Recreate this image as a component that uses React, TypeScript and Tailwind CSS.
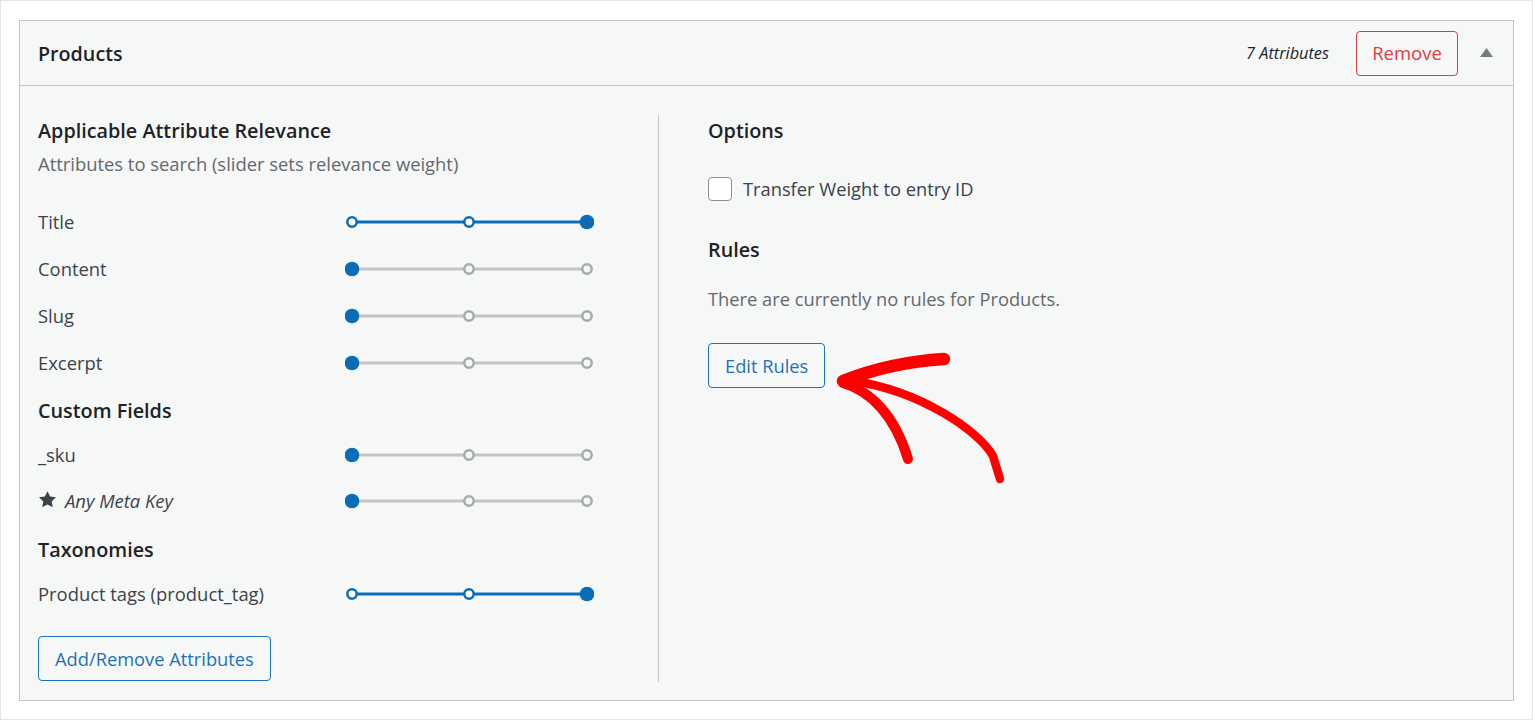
import React from "react";

const FONT = { fontFamily: '"Open Sans", "Noto Sans", sans-serif' };

function Slider({ value }: { value: 0 | 2 }) {
  const xs = [7, 124, 242];
  const blue = "#0a6cb5";
  if (value === 2) {
    return (
      <svg width="249" height="18" viewBox="0 0 249 18" className="block">
        <line x1="7" y1="9" x2="242" y2="9" stroke={blue} strokeWidth="3" />
        <circle cx={xs[0]} cy="9" r="4.7" fill="#fff" stroke={blue} strokeWidth="2.5" />
        <circle cx={xs[1]} cy="9" r="4.7" fill="#fff" stroke={blue} strokeWidth="2.5" />
        <circle cx={xs[2]} cy="9" r="7.3" fill={blue} />
      </svg>
    );
  }
  return (
    <svg width="249" height="18" viewBox="0 0 249 18" className="block">
      <line x1="7" y1="9" x2="242" y2="9" stroke="#c3c4c7" strokeWidth="3" />
      <circle cx={xs[1]} cy="9" r="4.7" fill="#f6f7f7" stroke="#a7aaad" strokeWidth="2.5" />
      <circle cx={xs[2]} cy="9" r="4.7" fill="#f6f7f7" stroke="#a7aaad" strokeWidth="2.5" />
      <circle cx={xs[0]} cy="9" r="7.3" fill={blue} />
    </svg>
  );
}

function Row({ label, value, h, italic, star }: { label: string; value: 0 | 2; h: string; italic?: boolean; star?: boolean }) {
  return (
    <div className={`flex items-center ${h}`}>
      <div className="w-[307px] flex items-center text-[18.4px] text-[#3c434a]">
        {star && (
          <svg width="19" height="19" viewBox="0 0 20 20" className="mr-[8px] -mt-[2px] shrink-0">
            <path d="M10 1.2l2.75 5.6 6.15.9-4.45 4.35 1.05 6.15L10 15.3l-5.5 2.9 1.05-6.15L1.1 7.7l6.15-.9z" fill="#3c434a" />
          </svg>
        )}
        <span className={italic ? "italic" : ""}>{label}</span>
      </div>
      <Slider value={value} />
    </div>
  );
}

export default function App() {
  return (
    <div style={FONT} className="relative w-[1533px] h-[720px] bg-white border border-[#e4e5e7] pl-[18px] pt-[19px]">
      <div className="w-[1495px] h-[681px] border border-[#c3c4c7] bg-[#f6f7f7] flex flex-col">
        {/* header */}
        <div className="h-[65px] border-b border-[#c3c4c7] flex items-center pl-[18px] pr-[19px]">
          <div className="text-[19.7px] font-semibold text-[#1d2327] flex-1 mt-[1px]">Products</div>
          <div className="text-[16.3px] italic text-[#1d2327] mr-[27px]">7 Attributes</div>
          <div className="h-[45px] w-[102px] rounded-[4px] border border-[#e23b3e] text-[#e23b3e] text-[18.5px] flex items-center justify-center">
            Remove
          </div>
          <svg width="13" height="9" viewBox="0 0 13 9" className="ml-[22px] mr-[1px] -mt-[2px]">
            <polygon points="6.5,0 13,9 0,9" fill="#787c82" />
          </svg>
        </div>
        {/* body */}
        <div className="flex flex-1 pt-[29px] pb-[18px] pl-[18px]">
          <div className="w-[621px] border-r border-[#c3c4c7] flex flex-col">
            <div className="mt-[2px] h-[28px] leading-[28px] text-[19.8px] font-semibold text-[#1d2327]">Applicable Attribute Relevance</div>
            <div className="mt-[7px] h-[24px] leading-[24px] text-[18.4px] text-[#646970]">Attributes to search (slider sets relevance weight)</div>
            <div className="mt-[22px]">
              <Row label="Title" value={2} h="h-[47px]" />
              <Row label="Content" value={0} h="h-[47px]" />
              <Row label="Slug" value={0} h="h-[47px]" />
              <Row label="Excerpt" value={0} h="h-[47px]" />
            </div>
            <div className="h-[47px] pt-[2px] flex items-center text-[19.8px] font-semibold text-[#1d2327]">Custom Fields</div>
            <Row label="_sku" value={0} h="h-[44px]" />
            <Row label="Any Meta Key" value={0} h="h-[47px]" italic star />
            <div className="h-[50px] pt-[2px] flex items-center text-[19.8px] font-semibold text-[#1d2327]">Taxonomies</div>
            <Row label="Product tags (product_tag)" value={2} h="h-[39px]" />
            <div className="mt-[23px]">
              <div className="inline-flex h-[45px] px-[16px] items-center rounded-[4px] border border-[#1f72b8] text-[#1f72b8] text-[18.3px] bg-[#f6f7f7]">
                Add/Remove Attributes
              </div>
            </div>
          </div>
          <div className="flex-1 pl-[49px] flex flex-col">
            <div className="mt-[2px] h-[28px] leading-[28px] text-[19.8px] font-semibold text-[#1d2327]">Options</div>
            <div className="mt-[32px] flex items-center h-[24px]">
              <div className="w-[24px] h-[24px] rounded-[4px] border border-[#8c8f94] bg-white" />
              <div className="ml-[11px] text-[18.3px] text-[#3c434a]">Transfer Weight to entry ID</div>
            </div>
            <div className="mt-[35px] h-[28px] leading-[28px] text-[19.8px] font-semibold text-[#1d2327]">Rules</div>
            <div className="mt-[23px] h-[24px] leading-[24px] text-[18.3px] text-[#646970]">There are currently no rules for Products.</div>
            <div className="mt-[32px]">
              <div className="inline-flex h-[45px] px-[16px] items-center rounded-[4px] border border-[#1f72b8] text-[#1f72b8] text-[18.3px] bg-[#f6f7f7]">
                Edit Rules
              </div>
            </div>
          </div>
        </div>
      </div>
      {/* annotation arrow */}
      <svg className="absolute left-[830px] top-[345px]" width="180" height="145" viewBox="0 0 180 145" fill="none">
        <path d="M22 35 C 90 45, 148 85, 162 110 L 169 133" stroke="#ff0000" strokeWidth="8.5" strokeLinecap="round" strokeLinejoin="round" />
        <path d="M12 37 C 40 45, 64 70, 77 113" stroke="#ff0000" strokeWidth="10" strokeLinecap="round" />
        <path d="M113 13 C 80 15, 45 22, 12 35" stroke="#ff0000" strokeWidth="12.5" strokeLinecap="round" />
      </svg>
    </div>
  );
}
